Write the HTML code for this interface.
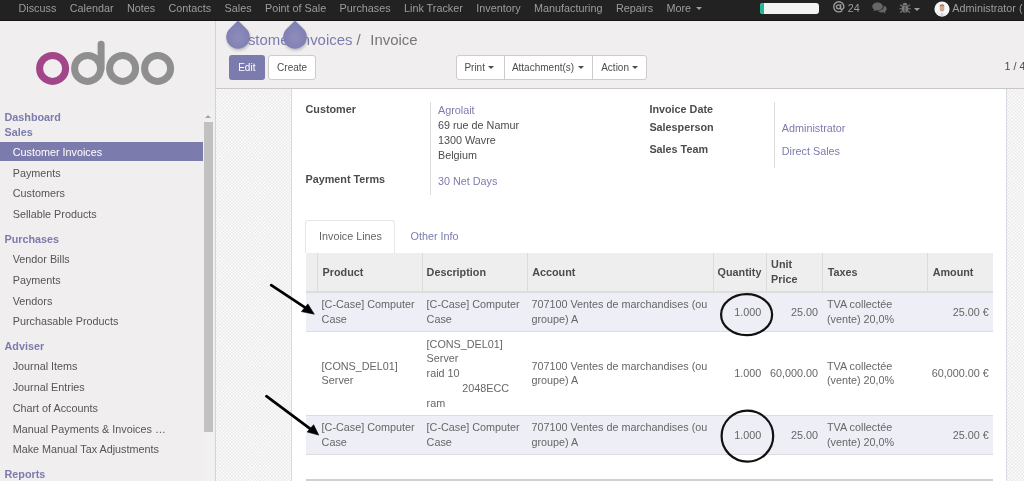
<!DOCTYPE html>
<html><head><meta charset="utf-8">
<style>
*{margin:0;padding:0;box-sizing:border-box}
html,body{width:1024px;height:481px;overflow:hidden;background:#f0eeee;font-family:"Liberation Sans",sans-serif;font-size:10.8px;color:#4c4c4c;position:relative}
.a{position:absolute;white-space:nowrap;line-height:15px;height:15px}
.b{font-weight:bold}
.p{color:#7c7bad}
.n{color:#9d9d9d}
.h{color:#7c7bad;font-weight:bold}
.i{color:#555}
.g{color:#666}
#root{position:absolute;left:0;top:0;width:1024px;height:481px;will-change:transform}
</style></head><body><div id="root">

<div style="position:absolute;left:216.00px;top:89.00px;width:808.00px;height:392.00px;background-color:#fbfbfb;background-image:conic-gradient(#ebebeb 25%,transparent 25%,transparent 50%,#ebebeb 50%,#ebebeb 75%,transparent 75%);background-size:3.34px 3.34px"></div>
<div style="position:absolute;left:291.00px;top:89.00px;width:716.00px;height:400.00px;background:#fff;border-left:1px solid #d9d9e3;border-right:1px solid #d9d9e3"></div>
<div style="position:absolute;left:0.00px;top:0.00px;width:1024.00px;height:21.00px;background:#222;border-bottom:1px solid #151515"></div>
<div class="a n" style="left:18.50px;top:1.00px;">Discuss</div>
<div class="a n" style="left:69.70px;top:1.00px;">Calendar</div>
<div class="a n" style="left:126.90px;top:1.00px;">Notes</div>
<div class="a n" style="left:168.50px;top:1.00px;">Contacts</div>
<div class="a n" style="left:224.60px;top:1.00px;">Sales</div>
<div class="a n" style="left:265.00px;top:1.00px;">Point of Sale</div>
<div class="a n" style="left:339.60px;top:1.00px;">Purchases</div>
<div class="a n" style="left:404.00px;top:1.00px;">Link Tracker</div>
<div class="a n" style="left:476.30px;top:1.00px;">Inventory</div>
<div class="a n" style="left:534.10px;top:1.00px;">Manufacturing</div>
<div class="a n" style="left:615.90px;top:1.00px;">Repairs</div>
<div class="a n" style="left:666.50px;top:1.00px;">More</div>
<div style="position:absolute;left:696px;top:7px;width:0;height:0;border-left:3.3px solid transparent;border-right:3.3px solid transparent;border-top:3.7px solid #9d9d9d"></div>
<div style="position:absolute;left:760.00px;top:3.00px;width:58.50px;height:11.00px;background:#f3f3f3;border-radius:3px;overflow:hidden"></div>
<div style="position:absolute;left:760.00px;top:3.00px;width:4.20px;height:11.00px;background:#21b799;border-radius:3px 0 0 3px"></div>
<svg style="position:absolute;left:833px;top:1.2px" width="12" height="12" viewBox="0 0 12 12"><g fill="none" stroke="#9d9d9d" stroke-width="1.35"><circle cx="5.8" cy="5.85" r="5.05" stroke-dasharray="28.6 3.2" stroke-dashoffset="-3.9"/><circle cx="5.5" cy="5.85" r="2.05"/><path d="M7.6 3.3 V7.2 Q7.6 8.5 8.9 8.5 Q10.6 8.4 10.85 6.2"/></g></svg>
<div class="a n" style="left:847.80px;top:1.00px;">24</div>
<svg style="position:absolute;left:872px;top:2px" width="15" height="12" viewBox="0 0 15 12">
<path d="M5.5 0.5 C8.5 0.5 10.8 2.3 10.8 4.5 C10.8 6.7 8.5 8.4 5.5 8.4 C4.9 8.4 4.3 8.3 3.8 8.2 L1.5 9.6 L2.1 7.6 C1 6.9 0.3 5.8 0.3 4.5 C0.3 2.3 2.5 0.5 5.5 0.5 Z" fill="#666"/>
<path d="M11.6 3.6 C13.4 4.2 14.6 5.5 14.6 7 C14.6 8.1 14 9.1 13 9.7 L13.5 11.5 L11.4 10.3 C11 10.4 10.5 10.4 10 10.4 C8.2 10.4 6.7 9.8 5.8 8.9 C9.2 8.8 11.8 6.9 11.8 4.5 C11.8 4.2 11.7 3.9 11.6 3.6 Z" fill="#666"/>
</svg>
<svg style="position:absolute;left:898.5px;top:2px" width="12" height="11" viewBox="0 0 12 11">
<g fill="#7a7a7a" stroke="#7a7a7a">
<path d="M3.6 2.9 C3.8 1.5 4.8 0.8 6 0.8 C7.2 0.8 8.2 1.5 8.4 2.9 Z" stroke="none"/>
<path d="M3 3.6 L9 3.6 L9 8 C9 9.7 7.7 10.6 6 10.6 C4.3 10.6 3 9.7 3 8 Z" stroke="none"/>
<line x1="3" y1="4.4" x2="1" y2="2.6" stroke-width="1.1" fill="none"/>
<line x1="9" y1="4.4" x2="11" y2="2.6" stroke-width="1.1" fill="none"/>
<line x1="3" y1="6.8" x2="0.4" y2="6.8" stroke-width="1.1" fill="none"/>
<line x1="9" y1="6.8" x2="11.6" y2="6.8" stroke-width="1.1" fill="none"/>
<line x1="3.2" y1="9" x2="1" y2="10.6" stroke-width="1.1" fill="none"/>
<line x1="8.8" y1="9" x2="11" y2="10.6" stroke-width="1.1" fill="none"/>
</g>
<rect x="5.6" y="4.5" width="0.8" height="5.6" fill="#2a2a2a"/>
</svg>
<div style="position:absolute;left:914px;top:7.5px;width:0;height:0;border-left:3.5px solid transparent;border-right:3.5px solid transparent;border-top:3.5px solid #9d9d9d"></div>
<svg style="position:absolute;left:933.5px;top:1px" width="16" height="16" viewBox="0 0 16 16">
<defs><clipPath id="cav"><circle cx="8" cy="8" r="7.6"/></clipPath></defs>
<circle cx="8" cy="8" r="7.6" fill="#f7f7f7"/>
<g clip-path="url(#cav)">
<path d="M3 16 C3.5 12.6 5.5 12 8 12 C10.5 12 12.5 12.6 13 16 Z" fill="#e9ebf0"/>
<path d="M7.5 12 L8.5 12 L8.3 16 L7.7 16 Z" fill="#9fb0c8"/>
<ellipse cx="8" cy="7.4" rx="2.3" ry="3.2" fill="#d2a58c"/>
<path d="M5.6 6 C5.5 3.8 6.6 3.2 8 3.2 C9.4 3.2 10.5 3.8 10.4 6 C9.8 5 9 4.8 8 4.8 C7 4.8 6.2 5 5.6 6Z" fill="#8a7466"/>
</g>
</svg>
<div class="a n" style="left:952.30px;top:1.00px;">Administrator (</div>
<div style="position:absolute;left:0.00px;top:21.00px;width:216.00px;height:460.00px;background:#f0eeee;border-right:1px solid #d5d3d3"></div>
<svg style="position:absolute;left:0;top:21px" width="216" height="80" viewBox="0 21 216 80">
<circle cx="52.6" cy="68.4" r="13" fill="none" stroke="#a24689" stroke-width="7"/>
<circle cx="87.6" cy="68.4" r="13" fill="none" stroke="#8f8f8f" stroke-width="7"/>
<line x1="101.1" y1="44.3" x2="101.1" y2="68.4" stroke="#8f8f8f" stroke-width="7" stroke-linecap="round"/>
<circle cx="122.6" cy="68.4" r="13" fill="none" stroke="#8f8f8f" stroke-width="7"/>
<circle cx="157.6" cy="68.4" r="13" fill="none" stroke="#8f8f8f" stroke-width="7"/>
</svg>
<div style="position:absolute;left:203.50px;top:110.00px;width:10.00px;height:371.00px;background:#f1f1f1"></div>
<div style="position:absolute;left:204.00px;top:122.40px;width:9.00px;height:309.80px;background:#c1c1c1"></div>
<div style="position:absolute;left:205px;top:115px;width:0;height:0;border-left:3.5px solid transparent;border-right:3.5px solid transparent;border-bottom:3.5px solid #a3a3a3"></div>
<div class="a h" style="left:4.50px;top:110.00px;">Dashboard</div>
<div class="a h" style="left:4.50px;top:125.00px;">Sales</div>
<div style="position:absolute;left:0.00px;top:142.00px;width:202.50px;height:19.30px;background:#7c7bad"></div>
<div class="a " style="left:12.70px;top:145.00px;color:#fff">Customer Invoices</div>
<div class="a i" style="left:12.70px;top:165.55px;">Payments</div>
<div class="a i" style="left:12.70px;top:186.30px;">Customers</div>
<div class="a i" style="left:12.70px;top:207.05px;">Sellable Products</div>
<div class="a h" style="left:4.50px;top:232.00px;">Purchases</div>
<div class="a i" style="left:12.70px;top:252.00px;">Vendor Bills</div>
<div class="a i" style="left:12.70px;top:272.75px;">Payments</div>
<div class="a i" style="left:12.70px;top:293.50px;">Vendors</div>
<div class="a i" style="left:12.70px;top:314.25px;">Purchasable Products</div>
<div class="a h" style="left:4.50px;top:339.25px;">Adviser</div>
<div class="a i" style="left:12.70px;top:359.25px;">Journal Items</div>
<div class="a i" style="left:12.70px;top:380.00px;">Journal Entries</div>
<div class="a i" style="left:12.70px;top:400.75px;">Chart of Accounts</div>
<div class="a i" style="left:12.70px;top:421.50px;">Manual Payments &amp; Invoices …</div>
<div class="a i" style="left:12.70px;top:442.25px;">Make Manual Tax Adjustments</div>
<div class="a h" style="left:4.50px;top:467.25px;">Reports</div>
<div style="position:absolute;left:216.00px;top:21.00px;width:808.00px;height:68.00px;background:#f0eeee;border-bottom:1px solid #c8c8c8"></div>
<div class="a p" style="left:228.80px;top:30.00px;font-size:14.94px;line-height:20px;height:20px">Customer Invoices</div>
<div class="a " style="left:356.50px;top:30.00px;font-size:14.94px;line-height:20px;height:20px;color:#777">/</div>
<div class="a " style="left:370.30px;top:30.00px;font-size:14.94px;line-height:20px;height:20px;color:#777">Invoice</div>
<svg style="position:absolute;left:238.00px;top:37.30px;overflow:visible" width="1" height="1"><defs><radialGradient id="dg238" cx="0.5" cy="0.6" r="0.55"><stop offset="0" stop-color="#8d8cbc"/><stop offset="1" stop-color="#7f7eb2"/></radialGradient><filter id="bl238" x="-50%" y="-50%" width="200%" height="200%"><feGaussianBlur stdDeviation="1.6"/></filter></defs><path d="M0 -16.60 L8.30 -8.32 A11.75 11.75 0 1 1 -8.30 -8.32 Z" fill="#000" opacity="0.22" transform="translate(0.6 1.6)" filter="url(#bl238)"/><path d="M0 -16.60 L8.30 -8.32 A11.75 11.75 0 1 1 -8.30 -8.32 Z" fill="url(#dg238)"/></svg>
<svg style="position:absolute;left:295.40px;top:37.30px;overflow:visible" width="1" height="1"><defs><radialGradient id="dg295" cx="0.5" cy="0.6" r="0.55"><stop offset="0" stop-color="#8d8cbc"/><stop offset="1" stop-color="#7f7eb2"/></radialGradient><filter id="bl295" x="-50%" y="-50%" width="200%" height="200%"><feGaussianBlur stdDeviation="1.6"/></filter></defs><path d="M0 -16.60 L8.30 -8.32 A11.75 11.75 0 1 1 -8.30 -8.32 Z" fill="#000" opacity="0.22" transform="translate(0.6 1.6)" filter="url(#bl295)"/><path d="M0 -16.60 L8.30 -8.32 A11.75 11.75 0 1 1 -8.30 -8.32 Z" fill="url(#dg295)"/></svg>
<div style="position:absolute;left:229.00px;top:55.00px;width:35.60px;height:25.00px;background:#7c7bad;border-radius:3px"></div>
<div class="a " style="left:238.20px;top:60.00px;color:#fff;font-size:10px">Edit</div>
<div style="position:absolute;left:268.30px;top:55.00px;width:47.30px;height:25.00px;background:#fff;border:1px solid #ccc;border-radius:3px"></div>
<div class="a " style="left:277.10px;top:60.00px;color:#4c4c4c;font-size:10px">Create</div>
<div style="position:absolute;left:455.70px;top:55.00px;width:191.00px;height:25.00px;background:#fff;border:1px solid #ccc;border-radius:3px"></div>
<div style="position:absolute;left:503.50px;top:55.00px;width:1.00px;height:25.00px;background:#ccc"></div>
<div style="position:absolute;left:592.40px;top:55.00px;width:1.00px;height:25.00px;background:#ccc"></div>
<div class="a " style="left:464.40px;top:60.00px;color:#4c4c4c;font-size:10px">Print</div>
<div class="a " style="left:511.90px;top:60.00px;color:#4c4c4c;font-size:10px">Attachment(s)</div>
<div class="a " style="left:601.20px;top:60.00px;color:#4c4c4c;font-size:10px">Action</div>
<div style="position:absolute;left:488.20px;top:66px;width:0;height:0;border-left:3.2px solid transparent;border-right:3.2px solid transparent;border-top:3.2px solid #4c4c4c"></div>
<div style="position:absolute;left:577.60px;top:66px;width:0;height:0;border-left:3.2px solid transparent;border-right:3.2px solid transparent;border-top:3.2px solid #4c4c4c"></div>
<div style="position:absolute;left:631.70px;top:66px;width:0;height:0;border-left:3.2px solid transparent;border-right:3.2px solid transparent;border-top:3.2px solid #4c4c4c"></div>
<div class="a " style="left:1004.60px;top:59.00px;color:#4c4c4c">1 / 4</div>
<div class="a b" style="left:305.50px;top:102.00px;">Customer</div>
<div style="position:absolute;left:430.00px;top:101.60px;width:1.00px;height:93.00px;background:#ddd"></div>
<div class="a p" style="left:438.00px;top:103.00px;">Agrolait</div>
<div class="a " style="left:438.00px;top:118.00px;">69 rue de Namur</div>
<div class="a " style="left:438.00px;top:133.00px;">1300 Wavre</div>
<div class="a " style="left:438.00px;top:148.00px;">Belgium</div>
<div class="a b" style="left:305.50px;top:172.00px;">Payment Terms</div>
<div class="a p" style="left:438.00px;top:174.00px;">30 Net Days</div>
<div class="a b" style="left:649.40px;top:102.00px;">Invoice Date</div>
<div style="position:absolute;left:774.00px;top:101.60px;width:1.00px;height:66.00px;background:#ddd"></div>
<div class="a b" style="left:649.40px;top:120.00px;">Salesperson</div>
<div class="a p" style="left:781.80px;top:121.00px;">Administrator</div>
<div class="a b" style="left:649.40px;top:142.00px;">Sales Team</div>
<div class="a p" style="left:781.80px;top:144.00px;">Direct Sales</div>
<div style="position:absolute;left:305.40px;top:220.00px;width:89.70px;height:33.00px;background:#fff;border:1px solid #e6e6e6;border-bottom:none;border-radius:3px 3px 0 0"></div>
<div class="a g" style="left:319.00px;top:229.00px;">Invoice Lines</div>
<div class="a p" style="left:410.50px;top:229.00px;">Other Info</div>
<div style="position:absolute;left:305.90px;top:253.00px;width:687.40px;height:40.00px;background:#eee;border-bottom:2px solid #ddd"></div>
<div style="position:absolute;left:317.00px;top:253.00px;width:1.00px;height:38.00px;background:#dcdcdc"></div>
<div style="position:absolute;left:422.00px;top:253.00px;width:1.00px;height:38.00px;background:#dcdcdc"></div>
<div style="position:absolute;left:527.00px;top:253.00px;width:1.00px;height:38.00px;background:#dcdcdc"></div>
<div style="position:absolute;left:713.00px;top:253.00px;width:1.00px;height:38.00px;background:#dcdcdc"></div>
<div style="position:absolute;left:766.00px;top:253.00px;width:1.00px;height:38.00px;background:#dcdcdc"></div>
<div style="position:absolute;left:822.00px;top:253.00px;width:1.00px;height:38.00px;background:#dcdcdc"></div>
<div style="position:absolute;left:927.00px;top:253.00px;width:1.00px;height:38.00px;background:#dcdcdc"></div>
<div class="a b" style="left:322.60px;top:265.00px;">Product</div>
<div class="a b" style="left:426.60px;top:265.00px;">Description</div>
<div class="a b" style="left:532.20px;top:265.00px;">Account</div>
<div class="a b" style="left:717.60px;top:265.00px;">Quantity</div>
<div class="a b" style="left:771.10px;top:257.00px;">Unit</div>
<div class="a b" style="left:771.10px;top:272.00px;">Price</div>
<div class="a b" style="left:827.80px;top:265.00px;">Taxes</div>
<div class="a b" style="left:932.70px;top:265.00px;">Amount</div>
<div style="position:absolute;left:305.90px;top:293.00px;width:687.40px;height:39.00px;background:#eeeef6;border-bottom:1px solid #ddd"></div>
<div style="position:absolute;left:305.90px;top:332.00px;width:687.40px;height:84.00px;background:#fff;border-bottom:1px solid #ddd"></div>
<div style="position:absolute;left:305.90px;top:416.00px;width:687.40px;height:39.00px;background:#eeeef6;border-bottom:1px solid #ddd"></div>
<div style="position:absolute;left:305.90px;top:478.50px;width:687.40px;height:2.00px;background:#d0d0d0"></div>
<div class="a g" style="left:321.60px;top:297.00px;">[C-Case] Computer</div>
<div class="a g" style="left:321.60px;top:312.00px;">Case</div>
<div class="a g" style="left:426.60px;top:297.00px;">[C-Case] Computer</div>
<div class="a g" style="left:426.60px;top:312.00px;">Case</div>
<div class="a g" style="left:531.40px;top:297.00px;">707100 Ventes de marchandises (ou</div>
<div class="a g" style="left:531.40px;top:312.00px;">groupe) A</div>
<div class="a g" style="right:262.80px;top:305.00px;">1.000</div>
<div class="a g" style="right:206.00px;top:305.00px;">25.00</div>
<div class="a g" style="left:827.00px;top:297.00px;">TVA collectée</div>
<div class="a g" style="left:827.00px;top:312.00px;">(vente) 20,0%</div>
<div class="a g" style="right:35.30px;top:305.00px;">25.00 €</div>
<div class="a g" style="left:321.60px;top:420.00px;">[C-Case] Computer</div>
<div class="a g" style="left:321.60px;top:435.00px;">Case</div>
<div class="a g" style="left:426.60px;top:420.00px;">[C-Case] Computer</div>
<div class="a g" style="left:426.60px;top:435.00px;">Case</div>
<div class="a g" style="left:531.40px;top:420.00px;">707100 Ventes de marchandises (ou</div>
<div class="a g" style="left:531.40px;top:435.00px;">groupe) A</div>
<div class="a g" style="right:262.80px;top:427.50px;">1.000</div>
<div class="a g" style="right:206.00px;top:427.50px;">25.00</div>
<div class="a g" style="left:827.00px;top:420.00px;">TVA collectée</div>
<div class="a g" style="left:827.00px;top:435.00px;">(vente) 20,0%</div>
<div class="a g" style="right:35.30px;top:427.50px;">25.00 €</div>
<div class="a g" style="left:321.60px;top:358.50px;">[CONS_DEL01]</div>
<div class="a g" style="left:321.60px;top:373.00px;">Server</div>
<div class="a g" style="left:426.60px;top:336.50px;">[CONS_DEL01]</div>
<div class="a g" style="left:426.60px;top:351.00px;">Server</div>
<div class="a g" style="left:426.60px;top:365.50px;">raid 10</div>
<div class="a g" style="left:462.20px;top:380.50px;">2048ECC</div>
<div class="a g" style="left:426.60px;top:395.50px;">ram</div>
<div class="a g" style="left:531.40px;top:358.50px;">707100 Ventes de marchandises (ou</div>
<div class="a g" style="left:531.40px;top:373.00px;">groupe) A</div>
<div class="a g" style="right:262.80px;top:366.00px;">1.000</div>
<div class="a g" style="right:206.00px;top:366.00px;">60,000.00</div>
<div class="a g" style="left:827.00px;top:358.50px;">TVA collectée</div>
<div class="a g" style="left:827.00px;top:373.00px;">(vente) 20,0%</div>
<div class="a g" style="right:35.30px;top:366.00px;">60,000.00 €</div>
<svg style="position:absolute;left:0;top:0" width="1024" height="481" viewBox="0 0 1024 481">
<ellipse cx="746.6" cy="314.7" rx="25.5" ry="20.5" fill="none" stroke="#111" stroke-width="2.2"/>
<ellipse cx="747.4" cy="436.1" rx="25.8" ry="25.5" fill="none" stroke="#111" stroke-width="2.2"/>
<line x1="271.2" y1="285.2" x2="309" y2="310.2" stroke="#000" stroke-width="2.7" stroke-linecap="round"/>
<path d="M314.3 314.2 L301.4 311.6 L307.9 303.9 Z" fill="#000" stroke="#000" stroke-width="0.6" stroke-linejoin="round"/>
<line x1="266.4" y1="396.2" x2="313" y2="430.8" stroke="#000" stroke-width="2.7" stroke-linecap="round"/>
<path d="M318.8 435.1 L307.2 432 L313.6 424.7 Z" fill="#000" stroke="#000" stroke-width="0.6" stroke-linejoin="round"/>
</svg>
</div></body></html>
